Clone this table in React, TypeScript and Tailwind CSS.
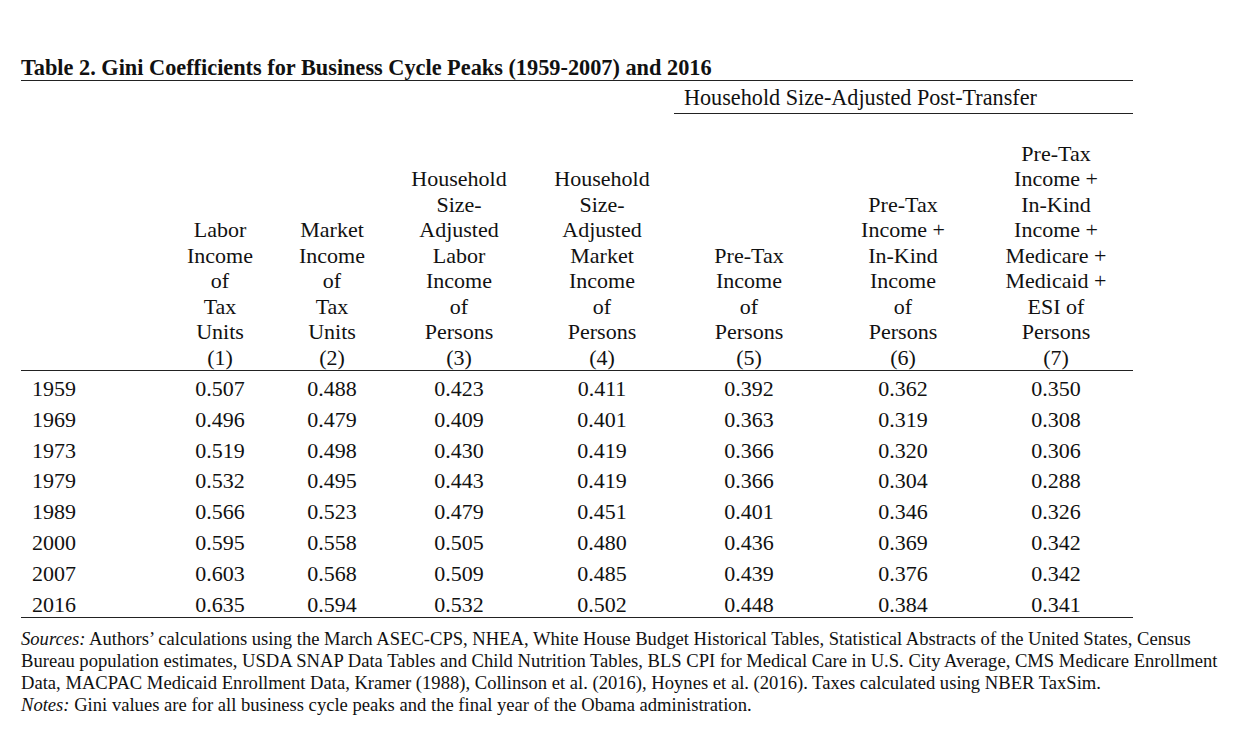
import React from "react";

const cols = [
  ["Labor", "Income", "of", "Tax", "Units", "(1)"],
  ["Market", "Income", "of", "Tax", "Units", "(2)"],
  ["Household", "Size-", "Adjusted", "Labor", "Income", "of", "Persons", "(3)"],
  ["Household", "Size-", "Adjusted", "Market", "Income", "of", "Persons", "(4)"],
  ["Pre-Tax", "Income", "of", "Persons", "(5)"],
  ["Pre-Tax", "Income +", "In-Kind", "Income", "of", "Persons", "(6)"],
  ["Pre-Tax", "Income +", "In-Kind", "Income +", "Medicare +", "Medicaid +", "ESI of", "Persons", "(7)"],
];

const rows: [string, string[]][] = [
  ["1959", ["0.507", "0.488", "0.423", "0.411", "0.392", "0.362", "0.350"]],
  ["1969", ["0.496", "0.479", "0.409", "0.401", "0.363", "0.319", "0.308"]],
  ["1973", ["0.519", "0.498", "0.430", "0.419", "0.366", "0.320", "0.306"]],
  ["1979", ["0.532", "0.495", "0.443", "0.419", "0.366", "0.304", "0.288"]],
  ["1989", ["0.566", "0.523", "0.479", "0.451", "0.401", "0.346", "0.326"]],
  ["2000", ["0.595", "0.558", "0.505", "0.480", "0.436", "0.369", "0.342"]],
  ["2007", ["0.603", "0.568", "0.509", "0.485", "0.439", "0.376", "0.342"]],
  ["2016", ["0.635", "0.594", "0.532", "0.502", "0.448", "0.384", "0.341"]],
];

const grid = "grid grid-cols-[140px_118px_106px_148px_138px_156px_152px_154px]";

export default function App() {
  return (
    <div
      className="w-[1255px] h-[746px] bg-white text-[#111] overflow-hidden"
      style={{ fontFamily: '"Liberation Serif", "Times New Roman", serif' }}
    >
      <div className="pl-[21px] pt-[55px]">
        <div className="w-[1112px]">
          <div className="text-[22.3px] font-bold leading-[25px] border-b border-[#222]">
            Table 2. Gini Coefficients for Business Cycle Peaks (1959-2007) and 2016
          </div>
          <div className="flex">
            <div className="ml-[653px] flex-1 border-b border-[#222] pt-[4px] pb-[3px] pl-[10px] text-[22.2px] leading-[25px]">
              Household Size-Adjusted Post-Transfer
            </div>
          </div>
          <div className={`${grid} h-[257px] items-end border-b border-[#222] text-[22px] leading-[25.5px]`}>
            <div />
            {cols.map((c, i) => (
              <div key={i} className="flex flex-col items-center text-center">
                {c.map((l, j) => (
                  <div key={j} className="whitespace-nowrap">{l}</div>
                ))}
              </div>
            ))}
          </div>
          <div className="border-b border-[#222] text-[22px]">
            {rows.map(([y, vals]) => (
              <div key={y} className={`${grid} h-[30.8px] pt-[6px] leading-[24px]`}>
                <div className="pl-[11px]">{y}</div>
                {vals.map((v, i) => (
                  <div key={i} className="text-center">{v}</div>
                ))}
              </div>
            ))}
          </div>
        </div>
        <div className="w-[1230px] mt-[10px] text-[18.6px] leading-[22px]">
          <div>
            <span className="italic">Sources:</span> Authors’ calculations using the March ASEC-CPS, NHEA, White House Budget Historical Tables, Statistical Abstracts of the United States, Census
          </div>
          <div>
            Bureau population estimates, USDA SNAP Data Tables and Child Nutrition Tables, BLS CPI for Medical Care in U.S. City Average, CMS Medicare Enrollment
          </div>
          <div>
            Data, MACPAC Medicaid Enrollment Data, Kramer (1988), Collinson et al. (2016), Hoynes et al. (2016). Taxes calculated using NBER TaxSim.
          </div>
          <div>
            <span className="italic">Notes:</span> Gini values are for all business cycle peaks and the final year of the Obama administration.
          </div>
        </div>
      </div>
    </div>
  );
}
